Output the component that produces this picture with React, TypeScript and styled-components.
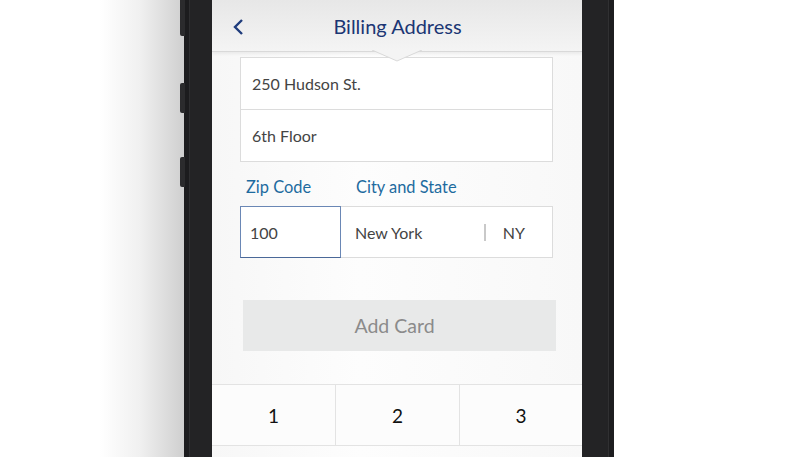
import React from 'react';
import styled, { createGlobalStyle } from 'styled-components';

const GlobalStyle = createGlobalStyle`
  html, body {
    margin: 0;
    padding: 0;
    background: #ffffff;
  }
  body {
    font-family: Lato, 'Open Sans', sans-serif;
    overflow: hidden;
  }
`;

const Page = styled.div`
  display: flex;
  width: 800px;
  height: 457px;
  overflow: hidden;
  background: #ffffff;
`;

const Backdrop = styled.div`
  flex: 0 0 184px;
  background: linear-gradient(to right, #ffffff 0, #ffffff 100px, #f0f0f0 140px, #cfcfcf 184px);
`;

const Frame = styled.div`
  position: relative;
  flex: 0 0 430px;
  box-sizing: border-box;
  display: flex;
  background: #232325;
  padding: 0 32px 0 28px;
  box-shadow: inset 5px 0 0 #1c1c1e, inset 6px 0 0 #2e2e30, inset -5px 0 0 #1d1d1f, inset -6px 0 0 #303032;
`;

const SideButton = styled.div<{ $top: number; $height: number }>`
  position: absolute;
  left: -4px;
  top: ${p => p.$top}px;
  width: 5px;
  height: ${p => p.$height}px;
  background: #2b2b2d;
  border-radius: 2px 0 0 2px;
`;

const Screen = styled.div`
  width: 370px;
  min-width: 0;
  display: flex;
  flex-direction: column;
  background: linear-gradient(to right, #f7f7f7, #fdfdfd 40%, #f8f8f8);
  overflow: hidden;
`;

const Header = styled.header`
  position: relative;
  flex: 0 0 51px;
  display: flex;
  align-items: center;
  justify-content: center;
  background: linear-gradient(to bottom, #e7e7e7, #f4f4f4);
  border-bottom: 1px solid #d9d9d9;
  box-shadow: 0 2px 3px rgba(0, 0, 0, 0.06);
  z-index: 1;
`;

const BackButton = styled.button`
  position: absolute;
  left: 16px;
  top: 16px;
  width: 20px;
  height: 22px;
  padding: 0;
  border: 0;
  background: none;
  display: flex;
  align-items: center;
  justify-content: center;
`;

const Title = styled.h1`
  margin: 0 0 0 1px;
  font-size: 20px;
  font-weight: 400;
  color: #1b3674;
`;

const Notch = styled.svg`
  position: absolute;
  left: 50%;
  bottom: -11px;
  margin-left: -25px;
`;

const Form = styled.div`
  display: flex;
  flex-direction: column;
  padding: 5px 29px 0 28px;
`;

const FieldStack = styled.div`
  display: flex;
  flex-direction: column;
  background: #ffffff;
  border: 1px solid #dcdcdc;
`;

const Field = styled.div`
  height: 51px;
  display: flex;
  align-items: center;
  padding: 0 11px;
  font-size: 16px;
  color: #444444;
  & + & {
    border-top: 1px solid #dcdcdc;
  }
`;

const Split = styled.div`
  display: grid;
  grid-template-columns: 101px 1fr;
`;

const Label = styled.div<{ $indent: number }>`
  height: 44px;
  box-sizing: border-box;
  padding: 15px 0 0 ${p => p.$indent}px;
  font-size: 16.4px;
  color: #1d6b9f;
`;

const Box = styled.div<{ $active?: boolean }>`
  height: 52px;
  box-sizing: border-box;
  display: flex;
  align-items: center;
  background: #ffffff;
  font-size: 16px;
  color: #444444;
  border: 1px solid ${p => (p.$active ? '#6a87b5' : '#dcdcdc')};
  border-bottom-color: ${p => (p.$active ? '#4a6898' : '#dcdcdc')};
  ${p => (p.$active ? 'padding-left: 9px;' : 'padding-left: 14px; border-left: none;')}
`;

const CityName = styled.span`
  flex: 1;
`;

const Separator = styled.span`
  width: 2px;
  height: 17px;
  background: #c9c9c9;
  margin-right: 17px;
`;

const StateCode = styled.span`
  padding-right: 27px;
`;

const PrimaryButton = styled.button`
  margin: 42px -3px 0 3px;
  height: 51px;
  padding: 0 10px 0 0;
  border: 0;
  background: #e8e9e9;
  font-family: inherit;
  font-size: 19.5px;
  color: #8b8b8b;
`;

const Keypad = styled.div`
  margin-top: 33px;
  display: grid;
  grid-template-columns: 123px 124px 1fr;
  grid-auto-rows: 61px;
  background: #fcfcfc;
  border-top: 1px solid #e3e3e3;
`;

const Key = styled.div`
  display: flex;
  align-items: center;
  justify-content: center;
  font-size: 19px;
  color: #111111;
  border-bottom: 1px solid #e3e3e3;
  & + & {
    border-left: 1px solid #e3e3e3;
  }
`;

export default function App() {
  return (
    <Page>
      <GlobalStyle />
      <Backdrop />
      <Frame>
        <SideButton $top={-4} $height={40} />
        <SideButton $top={83} $height={30} />
        <SideButton $top={157} $height={30} />
        <Screen>
          <Header>
            <BackButton aria-label="Back">
              <svg width="12" height="18" viewBox="0 0 12 18">
                <path d="M10 2 L3 9 L10 16" fill="none" stroke="#1f3c7c" strokeWidth="2.4" />
              </svg>
            </BackButton>
            <Title>Billing Address</Title>
            <Notch width="50" height="12" viewBox="0 0 50 12">
              <polygon points="0,0 25,11 50,0" fill="#f4f4f4" />
              <polyline points="0,0 25,11 50,0" fill="none" stroke="#d9d9d9" strokeWidth="1" />
            </Notch>
          </Header>
          <Form>
            <FieldStack>
              <Field>250 Hudson St.</Field>
              <Field>6th Floor</Field>
            </FieldStack>
            <Split>
              <Label $indent={6}>Zip Code</Label>
              <Label $indent={15}>City and State</Label>
              <Box $active>100</Box>
              <Box>
                <CityName>New York</CityName>
                <Separator />
                <StateCode>NY</StateCode>
              </Box>
            </Split>
            <PrimaryButton>Add Card</PrimaryButton>
          </Form>
          <Keypad>
            <Key>1</Key>
            <Key>2</Key>
            <Key>3</Key>
          </Keypad>
        </Screen>
      </Frame>
    </Page>
  );
}
